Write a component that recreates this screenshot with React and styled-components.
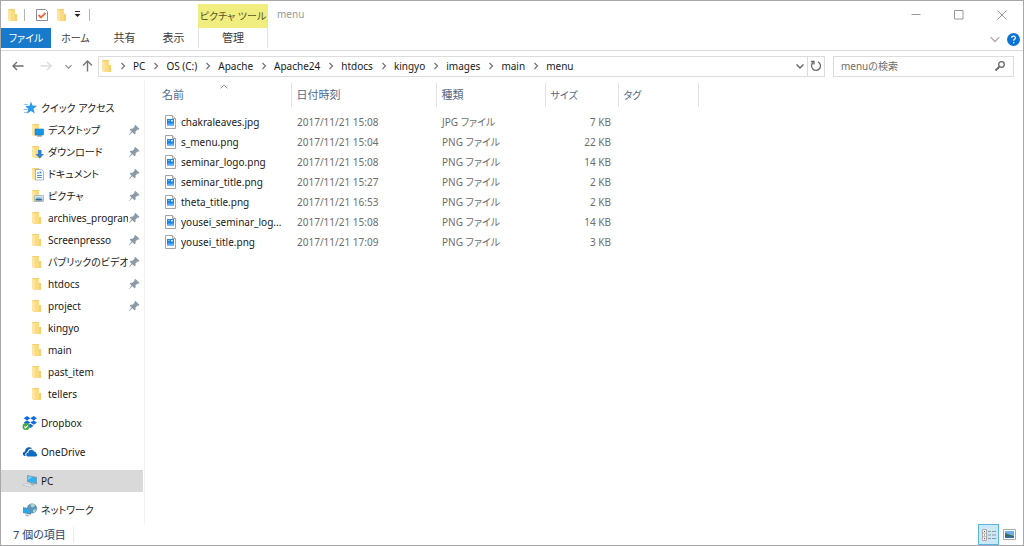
import React from 'react';
import styled, { createGlobalStyle, css } from 'styled-components';

const GlobalStyle = createGlobalStyle`
  * {
    box-sizing: border-box;
  }

  body {
    margin: 0;
    background: #fff;
    color: #1a1a1a;
    font-family: 'Noto Sans', 'Noto Sans CJK JP', sans-serif;
    font-size: 10px;
    line-height: 16px;
    font-feature-settings: 'palt';
  }

  button,
  input {
    font: inherit;
    font-feature-settings: inherit;
    border: 0;
    padding: 0;
    margin: 0;
    background: none;
    color: inherit;
  }

  a {
    color: inherit;
    text-decoration: none;
  }

  svg {
    display: block;
    flex: none;
  }
`;

const Window = styled.div`
  display: flex;
  flex-direction: column;
  min-height: 100vh;
  border: 1px solid #a8a8a8;
`;

const TitleBar = styled.header`
  display: flex;
  height: 27px;
`;

const QuickBar = styled.div`
  display: flex;
  align-items: center;
  width: 197px;
  padding-left: 4px;
`;

const IconButton = styled.button`
  display: flex;
  align-items: center;
  justify-content: center;
  width: ${({ $width }) => $width || 20}px;
  height: 20px;
`;

const Divider = styled.span`
  width: 1px;
  height: 12px;
  margin: 0 3px;
  background: #b4b4b4;
`;

const ContextTitle = styled.div`
  width: 70px;
  margin-top: 3px;
  padding-top: 4px;
  background: #f0ee7e;
  color: #55542c;
  text-align: center;
  white-space: nowrap;
`;

const Title = styled.h1`
  flex: 1;
  margin: 0;
  padding: 5px 9px;
  color: #999;
  font-size: 10px;
  font-weight: normal;
`;

const WindowButton = styled.button`
  display: flex;
  align-items: center;
  justify-content: center;
  width: 43px;
`;

const Ribbon = styled.nav`
  display: flex;
  height: 23px;
  border-bottom: 1px solid #dcdcdc;
`;

const Tab = styled.button`
  width: 49px;
  height: 20px;
  color: #3c3c3c;
  font-size: ${({ $kana }) => ($kana ? 10 : 11)}px;

  ${({ $file }) => $file && css`
    width: 50px;
    background: #1979ca;
    color: #fff;
  `}

  ${({ $context }) => $context && css`
    width: 70px;
    border: solid #e2e2e2;
    border-width: 0 1px;
  `}
`;

const RibbonTools = styled.div`
  display: flex;
  align-items: center;
  gap: 2px;
  margin-left: auto;
  padding-right: 3px;
`;

const AddressRow = styled.div`
  display: flex;
  align-items: center;
  height: 30px;
  padding: 0 9px 0 7px;
`;

const Arrows = styled.div`
  display: flex;
  flex: none;
  align-items: center;
  justify-content: space-between;
  width: 86px;
  margin-right: 4px;
`;

const AddressBox = styled.div`
  display: flex;
  flex: 1;
  align-items: center;
  height: 21px;
  border: 1px solid #dcdcdc;
`;

const Crumbs = styled.ol`
  display: flex;
  flex: 1;
  margin: 0;
  padding: 0;
  list-style: none;
`;

const Crumb = styled.li`
  display: flex;
  align-items: center;
  white-space: nowrap;

  svg {
    margin: 0 6px 0 7px;
  }

  &:first-child svg {
    margin-left: 4px;
  }
`;

const Refresh = styled(IconButton)`
  width: 17px;
  border-left: 1px solid #dcdcdc;
`;

const SearchBox = styled.label`
  display: flex;
  flex: none;
  align-items: center;
  width: 18%;
  height: 21px;
  margin-left: 8px;
  padding: 0 7px;
  border: 1px solid #dcdcdc;

  input {
    flex: 1;
    min-width: 0;
    outline: 0;
  }

  input::placeholder {
    color: #6d6d6d;
    opacity: 1;
  }
`;

const Body = styled.div`
  display: flex;
  flex: 1;
`;

const Sidebar = styled.aside`
  width: 144px;
  padding-top: 16px;
  border-right: 1px solid #f2f2f2;
`;

const Group = styled.ul`
  margin: 0 1px 7px 0;
  padding: 0;
  list-style: none;

  &:last-child {
    margin-bottom: 3px;
  }
`;

const NavLink = styled.a`
  display: flex;
  align-items: center;
  height: 22px;
  padding-right: 2px;
  padding-left: ${({ $nested }) => ($nested ? 28 : 21)}px;
  background: ${({ $selected }) => ($selected ? '#d9d9d9' : 'none')};

  span {
    flex: 1;
    margin-left: 3px;
    overflow: hidden;
    white-space: nowrap;
  }
`;

const Main = styled.main`
  flex: 1;
  min-width: 0;
  padding-top: 2px;
`;

const Files = styled.table`
  width: 100%;
  table-layout: fixed;
  border-collapse: collapse;
`;

const HeadCell = styled.th`
  position: relative;
  width: ${({ $width }) => ($width ? `${$width}px` : 'auto')};
  height: 24px;
  padding: 0 5px;
  padding-left: ${({ $first }) => ($first ? 17 : 5)}px;
  border-right: ${({ $width }) => ($width ? '1px solid #e3e3e3' : '0')};
  color: #53688a;
  font-size: ${({ $kana }) => ($kana ? 10 : 11)}px;
  font-weight: normal;
  text-align: left;

  svg {
    position: absolute;
    top: 0;
    left: 75px;
  }
`;

const Spacer = styled.tbody`
  td {
    height: 5px;
    padding: 0;
  }
`;

const Cell = styled.td`
  height: 20px;
  padding: 0 7px 0 6px;
  color: #6d6d6d;
  text-align: ${({ $right }) => ($right ? 'right' : 'left')};
  white-space: nowrap;
`;

const FileName = styled.a`
  display: flex;
  align-items: center;
  gap: 5px;
  padding-left: 14px;
  color: #1a1a1a;

  span {
    overflow: hidden;
    text-overflow: ellipsis;
  }
`;

const StatusBar = styled.footer`
  display: flex;
  align-items: center;
  height: 21px;
  padding: 0 3px 0 12px;
  color: #2c4668;
`;

const Count = styled.span`
  flex: none;
  min-width: 61px;
  padding-right: 7px;
  border-right: 1px solid #ececec;
  font-size: 11px;
`;

const ViewButtons = styled.div`
  display: flex;
  margin-left: auto;
`;

const ViewButton = styled.button`
  display: flex;
  align-items: center;
  justify-content: center;
  width: 21px;
  height: 21px;
  border: 1px solid ${({ $on }) => ($on ? '#5bb5e2' : 'transparent')};
  background: ${({ $on }) => ($on ? '#cbe8f6' : 'none')};
`;

const Folder = ({ children }) => (
  <svg width="16" height="16" viewBox="0 0 16 16">
    <path d="M3 2h7v5h2v7H6L3 13z" fill="#f5cf6d" />
    <path d="M6 3h4v5h2v6H6z" fill="#fbdb82" />
    <path d="M3 2l3 2v10l-3-1z" fill="#fde59f" />
    <path d="M10 8h2v6h-2z" fill="#f7d06a" />
    {children}
  </svg>
);

const Chevron = ({ dir = 'right', size = 8, color = '#777', width = 1.3 }) => (
  <svg width={size} height={size} viewBox="0 0 8 8" fill="none" stroke={color} strokeWidth={width}>
    {dir === 'right' && <path d="M2.500 1L5.500 4l-3 3" />}
    {dir === 'down' && <path d="M.5 2.500L4 6l3.500-3.500" />}
    {dir === 'up' && <path d="M.5 5.500L4 2l3.500 3.500" />}
  </svg>
);

const Pin = () => (
  <svg width="13" height="12" viewBox="0 0 13 12">
    <path d="M7.500 1l4 4-1 .8-1-.3-2 2 .1 2-1 .8-2.200-2.100L1 11.300l-.3-.4L3.600 7.600 1.700 5.700l.8-1 2 .1 2-2-.2-1z" fill="#8b9aa6" />
  </svg>
);

const FileIcon = () => (
  <svg width="11" height="14" viewBox="0 0 11 14">
    <path d="M.5.5h7l3 3v10H.5z" fill="#fff" stroke="#a3a3a3" />
    <path d="M7.500.5v3h3" fill="#eee" stroke="#a3a3a3" />
    <path d="M2 4h7v6.500H2z" fill="#1b86e4" />
    <path d="M3.500 5h1v1h-1zM6 5h2v1.500H6z" fill="#cfe8ff" />
    <path d="M2 9.500l2-1.500 2 1 1.500-1L9 9v1.500H2z" fill="#5bb0f5" />
  </svg>
);

const Star = () => (
  <svg width="16" height="16" viewBox="0 0 16 16">
    <path d="M9 1.500l1.500 4 4.500.2-3.500 3 1.200 4.800L9 11l-4.300 2.800 1.600-4.700-3-3 4.200-.4z" fill="#2f9be8" />
    <path d="M2 4.500h4M1.500 9.500h4M2 12.500h3" stroke="#8ccbf5" />
  </svg>
);

const Dropbox = () => (
  <svg width="16" height="16" viewBox="0 0 16 16">
    <path d="M5 1l3.300 2.200L5 5.400 1.700 3.200zM11.700 1L15 3.200l-3.300 2.200-3.400-2.200zM5 5.400l3.300 2.200L5 9.800 1.700 7.600zM11.700 5.400L15 7.600l-3.300 2.200-3.400-2.200zM8.300 8.700l3.200 2.200-3.200 2.200-3.300-2.200z" fill="#1268e5" />
    <circle cx="4" cy="11.500" r="3.500" fill="#43a843" />
    <path d="M2.300 11.500l1.300 1.400 2.300-2.600" fill="none" stroke="#fff" strokeWidth="1.200" />
  </svg>
);

const OneDrive = () => (
  <svg width="16" height="16" viewBox="0 0 16 16">
    <path d="M2.500 12C0 11 .6 7.500 3 7.500 3 3.500 8 2 10 4.800c-3-.4-4.500 1.400-4.700 3.400-2 .3-2.500 2.500-1.600 3.800z" fill="#0b62b8" />
    <path d="M6 12.500c-2.600-.4-2.200-3.700.3-3.700.1-3.300 4.600-4 5.700-1.200 1.700-.2 2.300 1.200 2.100 2 1.700.3 1.600 2.700-.3 2.900z" fill="#0f6cc6" />
  </svg>
);

const Computer = () => (
  <svg width="16" height="16" viewBox="0 0 16 16">
    <path d="M5 2l10 2v7.500L5 9z" fill="#8a9aa6" />
    <path d="M5.800 3l8.500 1.800v5.700L5.800 8.300z" fill="#35aeec" />
    <path d="M5.800 3l5 1.100-5 3z" fill="#7bcdf5" />
    <path d="M.5 12l3.500-1.700 7.500 2-3.500 1.700z" fill="#dce4ea" stroke="#a9b6c0" strokeWidth=".5" />
    <path d="M9 10l3 .8v1.400L8 11z" fill="#9aa8b3" />
  </svg>
);

const Network = () => (
  <svg width="16" height="16" viewBox="0 0 16 16">
    <circle cx="10" cy="6.500" r="5" fill="#5b98bd" />
    <path d="M8 2.500l4-.5 1 2-3 1.500zM11 8l3-1-1 3-2 .5z" fill="#b7d8c8" />
    <path d="M1 5l8 1.800v6L1 11z" fill="#6d8ba0" />
    <path d="M1.700 6l6.500 1.400v4.300L1.700 10.300z" fill="#27a9ee" />
    <path d="M3 12.500l3 .2 2 1.500H4z" fill="#9eb4c3" />
  </svg>
);

const FolderDesktop = () => (
  <Folder>
    <path d="M6 7h8.500v6H6z" fill="#1596e8" stroke="#1478bd" strokeWidth=".6" />
    <path d="M8 14h5" stroke="#6b8797" />
  </Folder>
);

const FolderDownload = () => (
  <Folder>
    <path d="M9 6h3.500v4H15l-4.200 4.500L6.500 10H9z" fill="#3382cf" />
  </Folder>
);

const FolderDocument = () => (
  <Folder>
    <path d="M6.500 3.500h6l2 2v8.500h-8z" fill="#fff" stroke="#92a7b8" strokeWidth=".8" />
    <path d="M8 7h2M8 9.500h5M8 11.500h5" stroke="#4b94cd" />
    <path d="M10.500 5.500h2v2h-2z" fill="#4b94cd" />
  </Folder>
);

const FolderPicture = () => (
  <Folder>
    <path d="M5.500 7.500h9v6h-9z" fill="#fff" stroke="#a1abb2" strokeWidth=".8" />
    <path d="M6.500 8.500h7v4h-7z" fill="#9cc9ea" />
    <path d="M6.500 11l3-.5 4 1v1h-7z" fill="#39677c" />
  </Folder>
);

const quickAccess = [
  { label: 'デスクトップ', Icon: FolderDesktop, pinned: true },
  { label: 'ダウンロード', Icon: FolderDownload, pinned: true },
  { label: 'ドキュメント', Icon: FolderDocument, pinned: true },
  { label: 'ピクチャ', Icon: FolderPicture, pinned: true },
  { label: 'archives_program', pinned: true },
  { label: 'Screenpresso', pinned: true },
  { label: 'パブリックのビデオ', pinned: true },
  { label: 'htdocs', pinned: true },
  { label: 'project', pinned: true },
  { label: 'kingyo' },
  { label: 'main' },
  { label: 'past_item' },
  { label: 'tellers' },
];

const places = [
  { label: 'Dropbox', Icon: Dropbox },
  { label: 'OneDrive', Icon: OneDrive },
  { label: 'PC', Icon: Computer, selected: true },
  { label: 'ネットワーク', Icon: Network },
];

const crumbs = ['PC', 'OS (C:)', 'Apache', 'Apache24', 'htdocs', 'kingyo', 'images', 'main', 'menu'];

const files = [
  ['chakraleaves.jpg', '2017/11/21 15:08', 'JPG ファイル', '7 KB'],
  ['s_menu.png', '2017/11/21 15:04', 'PNG ファイル', '22 KB'],
  ['seminar_logo.png', '2017/11/21 15:08', 'PNG ファイル', '14 KB'],
  ['seminar_title.png', '2017/11/21 15:27', 'PNG ファイル', '2 KB'],
  ['theta_title.png', '2017/11/21 16:53', 'PNG ファイル', '2 KB'],
  ['yousei_seminar_log...', '2017/11/21 15:08', 'PNG ファイル', '14 KB'],
  ['yousei_title.png', '2017/11/21 17:09', 'PNG ファイル', '3 KB'],
];

const NavItem = ({ label, Icon = Folder, pinned, selected, nested }) => (
  <li>
    <NavLink href="#" $nested={nested} $selected={selected}>
      <Icon />
      <span>{label}</span>
      {pinned && <Pin />}
    </NavLink>
  </li>
);

export default () => (
  <Window>
    <GlobalStyle />
    <TitleBar>
      <QuickBar>
        <Folder />
        <Divider />
        <IconButton $width={28} aria-label="プロパティ">
          <svg width="12" height="14" viewBox="0 0 12 14">
            <path d="M.5 1.500h9l2 2v9H.5z" fill="#fff" stroke="#8d8d8d" />
            <path d="M2.500 7l2.500 2.500L9.500 5" fill="none" stroke="#ec6a3d" strokeWidth="1.800" />
          </svg>
        </IconButton>
        <IconButton $width={12} aria-label="新しいフォルダー">
          <Folder />
        </IconButton>
        <IconButton $width={18} aria-label="カスタマイズ">
          <svg width="7" height="7" viewBox="0 0 7 7">
            <path d="M1 .5h5" stroke="#333" />
            <path d="M.5 3h6l-3 3z" fill="#222" />
          </svg>
        </IconButton>
        <Divider />
      </QuickBar>
      <ContextTitle>ピクチャ ツール</ContextTitle>
      <Title>menu</Title>
      <WindowButton aria-label="最小化">
        <svg width="10" height="10" viewBox="0 0 10 10">
          <path d="M.5 4.500h9" stroke="#999" />
        </svg>
      </WindowButton>
      <WindowButton aria-label="最大化">
        <svg width="10" height="10" viewBox="0 0 10 10">
          <path d="M.5.5h8.500v8.500H.5z" fill="none" stroke="#999" />
        </svg>
      </WindowButton>
      <WindowButton aria-label="閉じる">
        <svg width="10" height="10" viewBox="0 0 10 10">
          <path d="M.5.5l9 9M9.500.5l-9 9" stroke="#999" />
        </svg>
      </WindowButton>
    </TitleBar>

    <Ribbon>
      <Tab $file $kana>ファイル</Tab>
      <Tab $kana>ホーム</Tab>
      <Tab>共有</Tab>
      <Tab>表示</Tab>
      <Tab $context>管理</Tab>
      <RibbonTools>
        <IconButton aria-label="リボンの展開">
          <Chevron dir="down" size={10} color="#aaa" width={1} />
        </IconButton>
        <IconButton $width={13} aria-label="ヘルプ">
          <svg width="13" height="13" viewBox="0 0 13 13">
            <circle cx="6.500" cy="6.500" r="6.500" fill="#0a74d6" />
            <path d="M4.600 4.900c.1-2.300 3.800-2.200 3.800 0 0 1.300-1.800 1.300-1.800 2.800" fill="none" stroke="#fff" strokeWidth="1.200" />
            <path d="M6 9h1.300v1.300H6z" fill="#fff" />
          </svg>
        </IconButton>
      </RibbonTools>
    </Ribbon>

    <AddressRow>
      <Arrows>
        <IconButton aria-label="戻る">
          <svg width="12" height="10" viewBox="0 0 12 10" fill="none" stroke="#6e6e6e" strokeWidth="1.400">
            <path d="M11.500 5H1M5 1L1 5l4 4" />
          </svg>
        </IconButton>
        <IconButton aria-label="進む" disabled>
          <svg width="12" height="10" viewBox="0 0 12 10" fill="none" stroke="#dcdcdc" strokeWidth="1.400">
            <path d="M.5 5H11M7 1l4 4-4 4" />
          </svg>
        </IconButton>
        <IconButton $width={8} aria-label="最近表示した場所">
          <Chevron dir="down" size={7} color="#888" />
        </IconButton>
        <IconButton $width={14} aria-label="上へ">
          <svg width="11" height="12" viewBox="0 0 11 12" fill="none" stroke="#777" strokeWidth="1.400">
            <path d="M5.500 11.500V1M1 5.500L5.500 1 10 5.500" />
          </svg>
        </IconButton>
      </Arrows>
      <AddressBox>
        <Folder />
        <Crumbs>
          {crumbs.map(name => (
            <Crumb key={name}>
              <Chevron />
              <a href="#">{name}</a>
            </Crumb>
          ))}
        </Crumbs>
        <IconButton $width={14} aria-label="履歴">
          <Chevron dir="down" color="#666" width={1.500} />
        </IconButton>
        <Refresh aria-label="更新">
          <svg width="12" height="12" viewBox="0 0 12 12" fill="none" stroke="#6a6a6a" strokeWidth="1.300">
            <path d="M8 1.800a4.500 4.500 0 1 1-4.500.3" />
            <path d="M1 1.500h3v3" />
          </svg>
        </Refresh>
      </AddressBox>
      <SearchBox>
        <input type="text" placeholder="menuの検索" aria-label="menuの検索" />
        <svg width="12" height="12" viewBox="0 0 12 12" fill="none" stroke="#666">
          <circle cx="7.500" cy="4.500" r="2.800" strokeWidth="1.300" />
          <path d="M5.400 6.600L1.500 10.500" strokeWidth="1.800" />
        </svg>
      </SearchBox>
    </AddressRow>

    <Body>
      <Sidebar>
        <Group>
          <NavItem label="クイック アクセス" Icon={Star} />
          {quickAccess.map(item => (
            <NavItem key={item.label} nested {...item} />
          ))}
        </Group>
        {places.map(item => (
          <Group key={item.label}>
            <NavItem {...item} />
          </Group>
        ))}
      </Sidebar>
      <Main>
        <Files>
          <thead>
            <tr>
              <HeadCell $width={146} $first>
                <Chevron dir="up" color="#999" width={1} />
                名前
              </HeadCell>
              <HeadCell $width={145}>日付時刻</HeadCell>
              <HeadCell $width={109}>種類</HeadCell>
              <HeadCell $width={73} $kana>サイズ</HeadCell>
              <HeadCell $width={80} $kana>タグ</HeadCell>
              <HeadCell />
            </tr>
          </thead>
          <Spacer>
            <tr>
              <td colSpan="6" />
            </tr>
          </Spacer>
          <tbody>
            {files.map(([name, date, type, size]) => (
              <tr key={name}>
                <Cell>
                  <FileName href="#">
                    <FileIcon />
                    <span>{name}</span>
                  </FileName>
                </Cell>
                <Cell>{date}</Cell>
                <Cell>{type}</Cell>
                <Cell $right>{size}</Cell>
                <Cell />
                <Cell />
              </tr>
            ))}
          </tbody>
        </Files>
      </Main>
    </Body>

    <StatusBar>
      <Count>7 個の項目</Count>
      <ViewButtons>
        <ViewButton $on aria-label="詳細">
          <svg width="14" height="12" viewBox="0 0 14 12">
            <path d="M.5.5h4v11h-4zM.5 4.200h4M.5 7.800h4" fill="#fff" stroke="#999" strokeWidth=".8" />
            <path d="M2 2h1v1H2zM2 5.500h1v1H2z" fill="#555" />
            <path d="M2 9h1v1.300H2z" fill="#d33" />
            <path d="M6 2.500h3M10 2.500h4M6 6h3M10 6h4M6 9.500h3M10 9.500h4" stroke="#8d9aa3" />
          </svg>
        </ViewButton>
        <ViewButton aria-label="大アイコン">
          <svg width="13" height="11" viewBox="0 0 13 11">
            <path d="M.5.5h12v10H.5z" fill="#fff" stroke="#aaa" />
            <path d="M2 2h9v7H2z" fill="#6db1ea" />
            <path d="M2 4l4 1.500L11 7v2H2z" fill="#3d6b5c" />
            <path d="M2 7.500h9V9H2z" fill="#2f6fb0" />
          </svg>
        </ViewButton>
      </ViewButtons>
    </StatusBar>
  </Window>
);
